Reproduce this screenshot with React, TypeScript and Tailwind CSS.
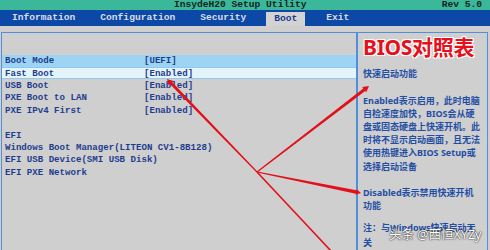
import React from 'react';

// ---------------------------------------------------------------------------
// BIOS Boot page with annotation overlay
// ---------------------------------------------------------------------------

const mono = "font-['Liberation_Mono',monospace]";
const cjk = "font-['Noto_Sans','Noto_Sans_CJK_SC',sans-serif]";

const bootRows: { label: string; value?: string; kind?: 'sel' | 'focus' }[] = [
  { label: 'Boot Mode', value: '[UEFI]', kind: 'sel' },
  { label: 'Fast Boot', value: '[Enabled]', kind: 'focus' },
  { label: 'USB Boot', value: '[Enabled]' },
  { label: 'PXE Boot to LAN', value: '[Enabled]' },
  { label: 'PXE IPv4 First', value: '[Enabled]' },
  { label: '' },
  { label: 'EFI' },
  { label: 'Windows Boot Manager(LITEON CV1-8B128)' },
  { label: 'EFI USB Device(SMI USB Disk)' },
  { label: 'EFI PXE Network' },
];

function arrowPoints(x1: number, y1: number, x2: number, y2: number, w1: number, w2: number, head: number) {
  const dx = x2 - x1;
  const dy = y2 - y1;
  const len = Math.hypot(dx, dy);
  const ux = dx / len;
  const uy = dy / len;
  const nx = -uy;
  const ny = ux;
  const bx = x2 - ux * head;
  const by = y2 - uy * head;
  const pts: [number, number][] = [
    [x1 + (nx * w1) / 2, y1 + (ny * w1) / 2],
    [bx + (nx * w2) / 2, by + (ny * w2) / 2],
    [bx + nx * head * 0.55, by + ny * head * 0.55],
    [x2, y2],
    [bx - nx * head * 0.55, by - ny * head * 0.55],
    [bx - (nx * w2) / 2, by - (ny * w2) / 2],
    [x1 - (nx * w1) / 2, y1 - (ny * w1) / 2],
  ];
  return pts.map((p) => p.join(',')).join(' ');
}

function Arrows() {
  const cx = 257;
  const cy = 172;
  return (
    <svg className="absolute inset-0 pointer-events-none" width="490" height="250" viewBox="0 0 490 250">
      <polygon points={arrowPoints(cx, cy, 167, 79, 1.2, 3, 6)} fill="#e3101a" />
      <polygon points={arrowPoints(cx, cy, 369, 86, 1.2, 3.2, 6)} fill="#e3101a" />
      <polygon points={arrowPoints(cx, cy, 361, 193, 1.2, 3.4, 5)} fill="#e3101a" />
      <line x1={cx} y1={cy} x2={332} y2={252} stroke="#e3101a" strokeWidth="1.6" />
    </svg>
  );
}

export default function App() {
  return (
    <div className="relative w-[490px] h-[250px] overflow-hidden bg-[#cfcfcf] flex flex-col">
      {/* Title bar */}
      <div className={`h-[12px] bg-[#3bb89a] flex items-center text-[9.6px] font-bold text-[#15231f] ${mono} leading-none`}>
        <span className="ml-[174px]">InsydeH20 Setup Utility</span>
        <span className="ml-auto mr-[8px]">Rev 5.0</span>
      </div>

      {/* Menu bar */}
      <div className={`h-[20px] bg-[#0c48a5] flex items-stretch text-[9.6px] font-bold text-[#d9dde8] ${mono} leading-none`}>
        <span className="ml-[12px] flex items-center">Information</span>
        <span className="ml-[25px] flex items-center">Configuration</span>
        <span className="ml-[25px] flex items-center">Security</span>
        <span className="ml-[20px] mt-[2px] px-[8px] flex items-center bg-[#d3d3d3] text-[#1c3c8e]">Boot</span>
        <span className="ml-[21px] flex items-center">Exit</span>
      </div>

      <div className="h-[7px]" />

      {/* Panels */}
      <div className="flex-1 flex">
        <div className="ml-[1px] w-[356px] border-l border-t border-r border-[#4f8fdc] pt-[22px]">
          {bootRows.map((r, i) => (
            <div
              key={i}
              className={`h-[12.4px] flex items-center pl-[3px] text-[9.1px] font-bold text-[#1e3d8e] ${mono} leading-none whitespace-nowrap ${
                r.kind === 'sel'
                  ? 'bg-[#9dd4f4]'
                  : r.kind === 'focus'
                  ? 'bg-[#e3f4fb] border-y border-[#8fc9ee]'
                  : ''
              }`}
            >
              <span className="w-[139px] shrink-0">{r.label}</span>
              {r.value && <span>{r.value}</span>}
            </div>
          ))}
        </div>

        <div className={`w-[131px] border-l border-t border-r border-[#4f8fdc] pl-[5px] ${cjk} font-bold text-[9px] text-[#1f4ea5] whitespace-nowrap`}>
          <div className="mt-[4px] h-[22px] flex items-center text-[21px] leading-none text-[#e5101b] tracking-[-0.3px] [text-shadow:0_0_1px_#fff,1px_1px_0_#fff,-1px_-1px_0_#fff,1px_-1px_0_#fff,-1px_1px_0_#fff]">
            BIOS对照表
          </div>
          <div className="mt-[8px] leading-[13px]">快速启动功能</div>
          <div className="mt-[14px] leading-[13.2px]">
            <div>Enabled表示启用，此时电脑</div>
            <div>自检速度加快，BIOS会从硬</div>
            <div>盘或固态硬盘上快速开机。此</div>
            <div>时将不显示启动画面，且无法</div>
            <div>使用热键进入BIOS Setup或</div>
            <div>选择启动设备</div>
          </div>
          <div className="mt-[13px] leading-[13.6px]">
            <div>Disabled表示禁用快速开机</div>
            <div>功能</div>
          </div>
          <div className="mt-[8px] leading-[14.5px]">
            <div>注：与Windows快速启动无</div>
            <div>关</div>
          </div>
        </div>
      </div>

      <Arrows />

      {/* Watermark */}
      <div className={`absolute left-[389px] top-[229px] text-[12.5px] leading-none text-white ${cjk} [text-shadow:0_0_2px_#333,0_0_1px_#000]`}>
        头条 @西恒XYZy
      </div>
    </div>
  );
}
